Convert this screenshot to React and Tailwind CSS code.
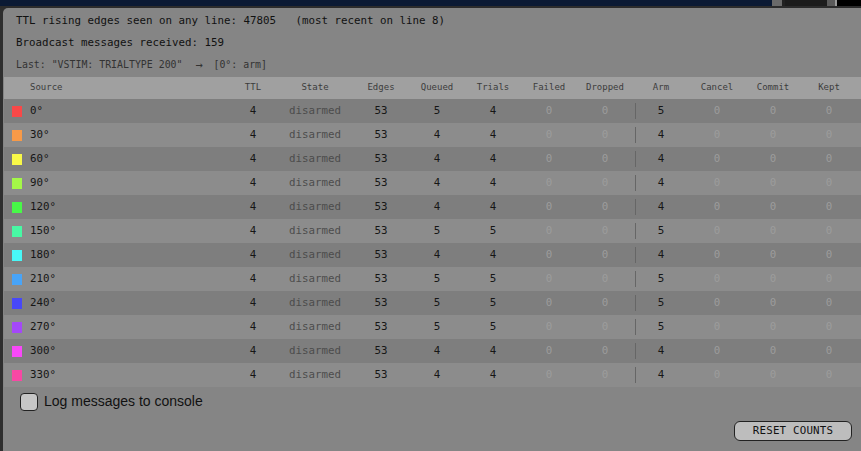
import React from "react";

const rows = [
  { label: "0°", color: "#f84848", queued: 5, trials: 4, arm: 5 },
  { label: "30°", color: "#f89a48", queued: 4, trials: 4, arm: 4 },
  { label: "60°", color: "#f8f848", queued: 4, trials: 4, arm: 4 },
  { label: "90°", color: "#a4f848", queued: 4, trials: 4, arm: 4 },
  { label: "120°", color: "#48f848", queued: 4, trials: 4, arm: 4 },
  { label: "150°", color: "#48f8a4", queued: 5, trials: 5, arm: 5 },
  { label: "180°", color: "#48f8f8", queued: 4, trials: 4, arm: 4 },
  { label: "210°", color: "#48a4f8", queued: 5, trials: 5, arm: 5 },
  { label: "240°", color: "#4848f8", queued: 5, trials: 5, arm: 5 },
  { label: "270°", color: "#a448f8", queued: 5, trials: 5, arm: 5 },
  { label: "300°", color: "#f848f8", queued: 4, trials: 4, arm: 4 },
  { label: "330°", color: "#f848a4", queued: 4, trials: 4, arm: 4 },
];

const cols =
  "grid grid-cols-[225px_48px_76px_56px_56px_56px_56px_56px_56px_56px_56px_56px_4px]";

const mono = { fontFamily: '"DejaVu Sans Mono", "Liberation Mono", monospace' };

function Zero() {
  return <div className="text-center text-[#9c9c9c]">0</div>;
}

export default function App() {
  return (
    <div className="w-[861px] h-[451px] bg-[#2e2e2e] overflow-hidden flex flex-col" style={mono}>
      <div className="h-[8px] flex shrink-0 border-b-2 border-[#2c2c2c]">
        <div className="w-[772px] bg-[#0b1a34]" />
        <div className="w-[10px] bg-[#6a6a6a]" />
        <div className="w-[3px] bg-[#222]" />
        <div className="w-[42px] bg-[#1c1c1c]" />
        <div className="w-[8px] bg-[#5a5a5a]" />
        <div className="w-[2px] bg-[#9a9a9a]" />
        <div className="flex-1 bg-black" />
      </div>

      <div className="flex-1 ml-[3px] bg-[#858585] rounded-tl-[5px] pt-[2px] flex flex-col">
        <div className="h-[22px] leading-[22px] pl-[13px] text-[10.8px] text-[#111] whitespace-pre">
          TTL rising edges seen on any line: 47805   (most recent on line 8)
        </div>
        <div className="h-[22px] leading-[22px] pl-[13px] text-[10.8px] text-[#111] whitespace-pre">
          Broadcast messages received: 159
        </div>
        <div className="h-[22px] pl-[13px] text-[9.9px] text-[#333] whitespace-pre flex items-center">
          <span>Last: "VSTIM: TRIALTYPE 200"</span>
          <span className="w-[12px] ml-[13px] text-[12px] leading-none">→</span>
          <span className="ml-[6px]">[0°: arm]</span>
        </div>

        <div className="ml-px mt-px">
          <div className={`${cols} h-[22px] items-center bg-[#a0a0a0] text-[9px] text-[#3c3c3c]`}>
            <div className="pl-[26px]">Source</div>
            <div className="text-center">TTL</div>
            <div className="text-center">State</div>
            <div className="text-center">Edges</div>
            <div className="text-center">Queued</div>
            <div className="text-center">Trials</div>
            <div className="text-center">Failed</div>
            <div className="text-center">Dropped</div>
            <div className="text-center">Arm</div>
            <div className="text-center">Cancel</div>
            <div className="text-center">Commit</div>
            <div className="text-center">Kept</div>
            <div />
          </div>

          {rows.map((r, i) => (
            <div
              key={r.label}
              className={`${cols} h-[24px] items-center text-[10.8px] text-[#161616] ${
                i % 2 === 0 ? "bg-[#7e7e7e]" : "bg-[#8c8c8c]"
              }`}
            >
              <div className="flex items-center pl-[8px]">
                <span className="w-[10px] h-[11px] shrink-0" style={{ backgroundColor: r.color }} />
                <span className="ml-[8px]">{r.label}</span>
              </div>
              <div className="text-center">4</div>
              <div className="text-center text-[#4c4c4c]">disarmed</div>
              <div className="text-center">53</div>
              <div className="text-center">{r.queued}</div>
              <div className="text-center">{r.trials}</div>
              <Zero />
              <Zero />
              <div className="flex items-center">
                <span className="w-px h-[16px] ml-[2px] bg-[#666]" />
                <span className="flex-1 text-center pr-[3px]">{r.arm}</span>
              </div>
              <Zero />
              <Zero />
              <Zero />
              <div />
            </div>
          ))}
        </div>

        <label className="flex items-center mt-[4px] ml-[17px] gap-[6px]">
          <span className="w-[18px] h-[18px] rounded-[4px] border border-[#222] bg-[#c6c6c6]" />
          <span
            className="text-[14px] text-[#111]"
            style={{ fontFamily: '"Liberation Sans", Arial, sans-serif' }}
          >
            Log messages to console
          </span>
        </label>

        <div className="flex justify-end mt-[9px] mr-[9px]">
          <button className="w-[118px] h-[20px] rounded-[6px] border border-[#222] bg-[#bdbdbd] text-[10.8px] text-[#111] tracking-[0.2px] leading-none">
            RESET COUNTS
          </button>
        </div>
      </div>
    </div>
  );
}
